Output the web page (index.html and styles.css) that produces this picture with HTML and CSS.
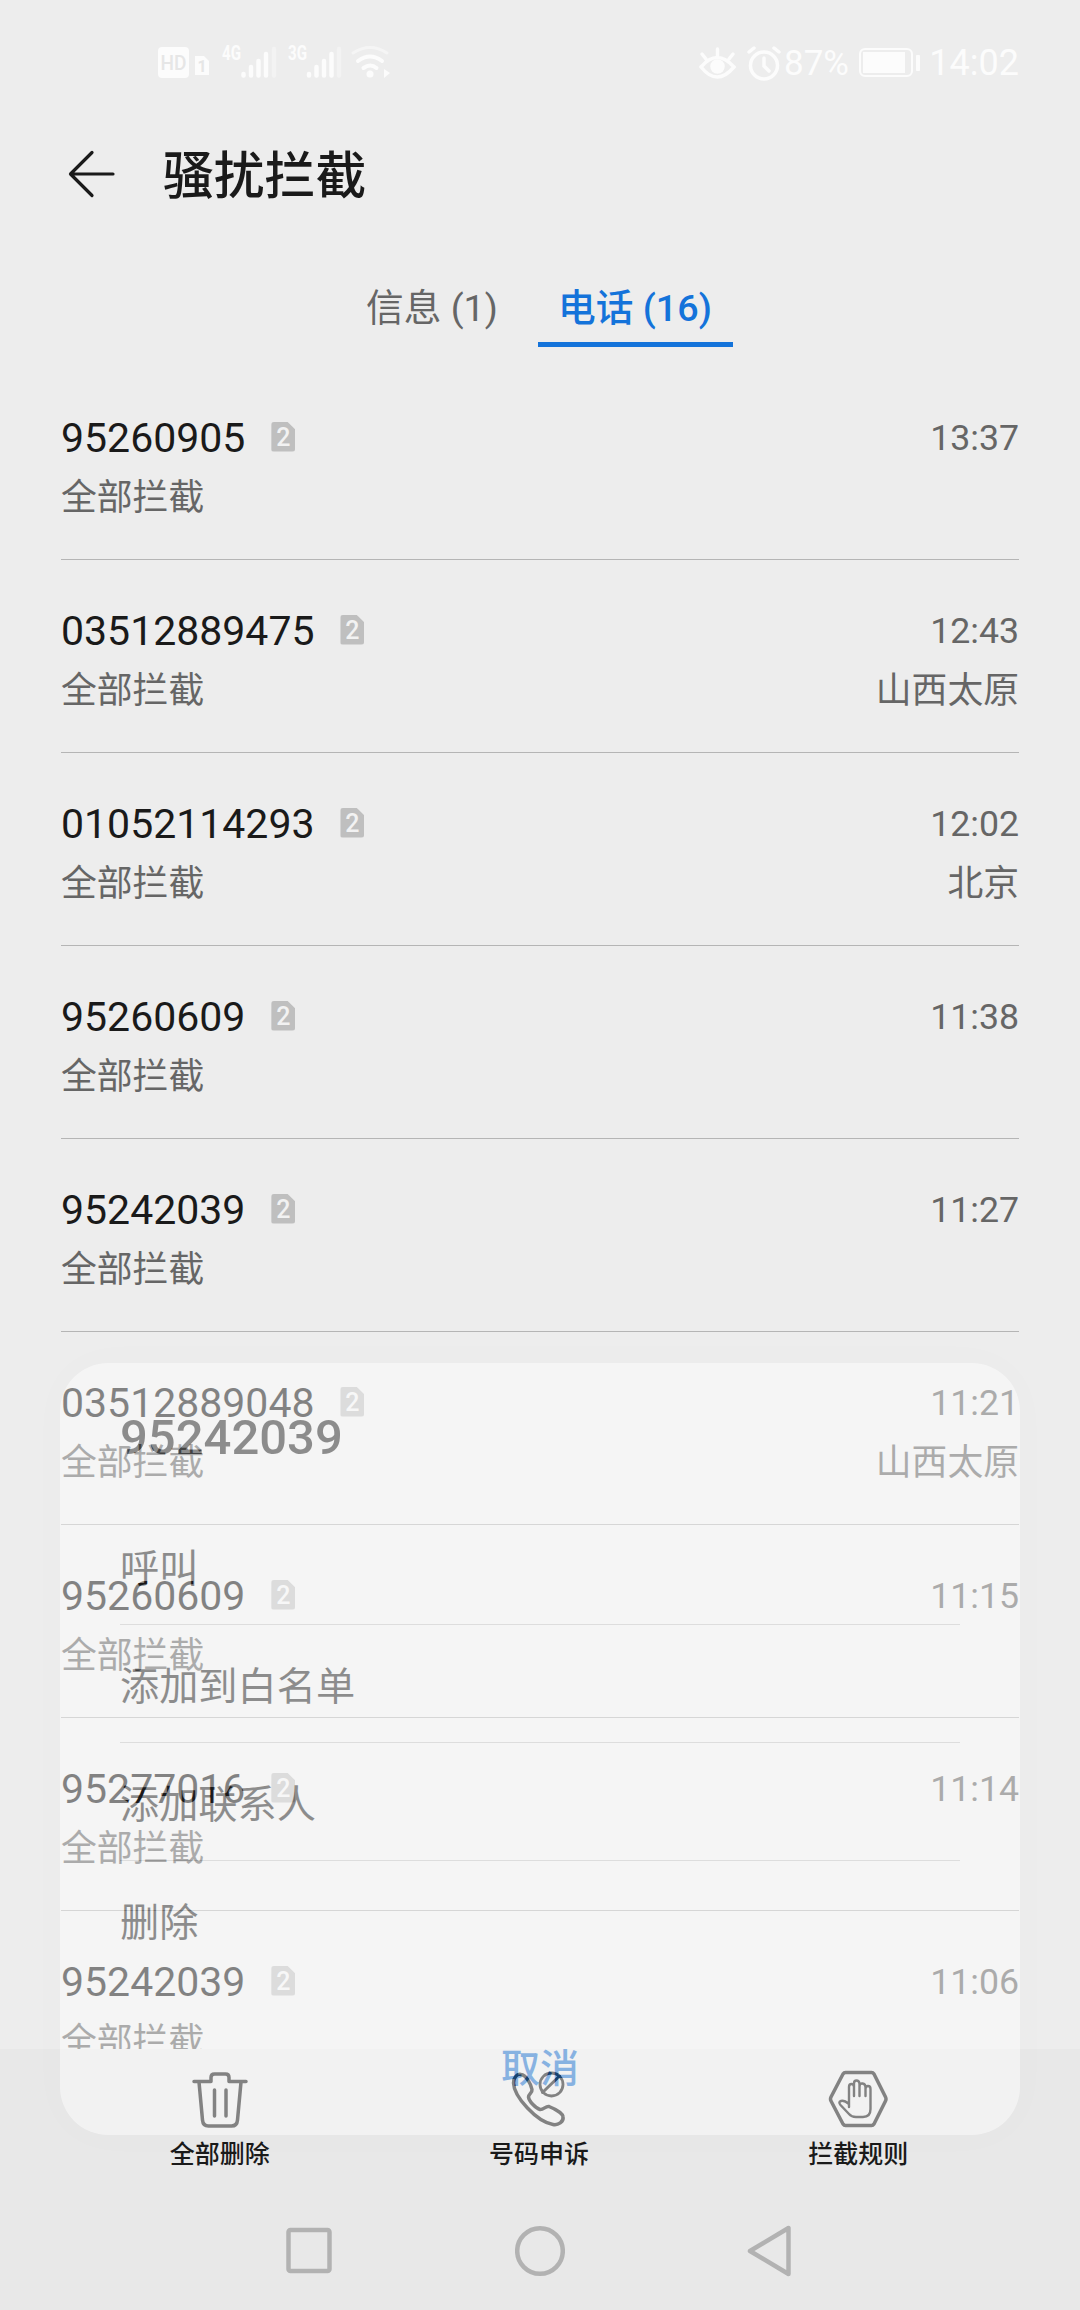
FILE: index.html
```html
<!DOCTYPE html>
<html lang="zh-CN">
<head>
    <meta charset="UTF-8">
    <meta name="viewport" content="width=device-width, initial-scale=1.0">
    <title>骚扰拦截</title>
    <link rel="stylesheet" href="styles.css">
</head>
<body>
    <div class="screen">
        <div class="status-bar">
            <svg class="status-left" width="280" height="60" viewBox="0 0 280 60">
                <rect x="18" y="17" width="31" height="31" rx="4" fill="#fcfcfc"/>
                <text x="20.5" y="40" class="hd-text" textLength="26" lengthAdjust="spacingAndGlyphs">HD</text>
                <path d="M55 26h9l5 5v14h-14v-19z" fill="#fcfcfc"/>
                <text x="57.5" y="42" class="sim-text">1</text>
                <text x="82" y="30" class="net-text" textLength="19" lengthAdjust="spacingAndGlyphs">4G</text>
                <g stroke="#fcfcfc" stroke-width="4.5" stroke-linecap="round">
                    <path d="M103.500 44v1.500M111 37v8.500M118.500 31v14.500M126 24v21.500"/>
                    <path d="M169 44v1.500M176.500 37v8.500M184 31v14.500M191.500 24v21.500"/>
                    <path d="M134 19v26.500M199 19v26.500" stroke="#f3f3f3"/>
                </g>
                <text x="148" y="30" class="net-text" textLength="19" lengthAdjust="spacingAndGlyphs">3G</text>
                <g fill="none" stroke="#fcfcfc" stroke-width="4" stroke-linecap="round">
                    <path d="M213 23q17-11 34 0" stroke="#f5f5f5" stroke-width="3"/>
                    <path d="M218 31q12-9 24 0M223.500 38q7-5 13 0"/>
                </g>
                <circle cx="230" cy="44" r="3.500" fill="#fcfcfc"/>
                <path d="M244 39l6 4-6 5z" fill="#fcfcfc"/>
            </svg>
            <div class="status-right">
                <svg width="86" height="40" viewBox="0 0 86 40" fill="none" stroke="#fcfcfc" stroke-width="3.500" stroke-linecap="round">
                    <path d="M3 24q16-19 33 0q-17 20-33 0zM19.500 6v7M4 11l4 5M35 11l-4 5"/>
                    <circle cx="19.500" cy="23.500" r="5.500" fill="#fcfcfc"/>
                    <circle cx="66" cy="22.500" r="13.500"/>
                    <path d="M66 15v8l5 5M51 9l5-4M81 9l-5-4"/>
                </svg>
                <span class="percent">87%</span>
                <svg class="battery" width="62" height="32" viewBox="0 0 62 32">
                    <rect x="1" y="2" width="52" height="27" rx="5" fill="none" stroke="#fcfcfc" stroke-width="2"/>
                    <rect x="4" y="5" width="42" height="21" fill="#fcfcfc"/>
                    <rect x="57" y="8" width="4" height="16" rx="1" fill="#fcfcfc"/>
                </svg>
                <span class="clock">14:02</span>
            </div>
        </div>

        <div class="header">
            <svg width="48" height="48" viewBox="0 0 48 48" fill="none" stroke="#1a1a1a" stroke-width="3.200" stroke-linecap="round" stroke-linejoin="round">
                <path d="M45 24H3M24 2.500L2.500 24L24 45.500"/>
            </svg>
            <h1>骚扰拦截</h1>
        </div>

        <div class="tabs">
            <div class="tab">信息 (1)</div>
            <div class="tab active">电话 (16)</div>
        </div>

        <div class="call-list">
            <div class="call">
                <div class="line"><span class="number">95260905</span><span class="sim">2</span><span class="time">13:37</span></div>
                <div class="line sub"><span>全部拦截</span></div>
            </div>
            <div class="call">
                <div class="line"><span class="number">03512889475</span><span class="sim">2</span><span class="time">12:43</span></div>
                <div class="line sub"><span>全部拦截</span><span>山西太原</span></div>
            </div>
            <div class="call">
                <div class="line"><span class="number">01052114293</span><span class="sim">2</span><span class="time">12:02</span></div>
                <div class="line sub"><span>全部拦截</span><span>北京</span></div>
            </div>
            <div class="call">
                <div class="line"><span class="number">95260609</span><span class="sim">2</span><span class="time">11:38</span></div>
                <div class="line sub"><span>全部拦截</span></div>
            </div>
            <div class="call">
                <div class="line"><span class="number">95242039</span><span class="sim">2</span><span class="time">11:27</span></div>
                <div class="line sub"><span>全部拦截</span></div>
            </div>
            <div class="call">
                <div class="line"><span class="number">03512889048</span><span class="sim">2</span><span class="time">11:21</span></div>
                <div class="line sub"><span>全部拦截</span><span>山西太原</span></div>
            </div>
            <div class="call">
                <div class="line"><span class="number">95260609</span><span class="sim">2</span><span class="time">11:15</span></div>
                <div class="line sub"><span>全部拦截</span></div>
            </div>
            <div class="call">
                <div class="line"><span class="number">95277016</span><span class="sim">2</span><span class="time">11:14</span></div>
                <div class="line sub"><span>全部拦截</span></div>
            </div>
            <div class="call">
                <div class="line"><span class="number">95242039</span><span class="sim">2</span><span class="time">11:06</span></div>
                <div class="line sub"><span>全部拦截</span></div>
            </div>
        </div>

        <div class="toolbar">
            <div class="tool">
                <svg width="60" height="60" viewBox="0 0 60 60" fill="none" stroke="#1a1a1a" stroke-width="3.500" stroke-linecap="round" stroke-linejoin="round">
                    <path d="M4 11.500h17v-4q0-3.500 3.500-3.500h11q3.500 0 3.500 3.500v4h17"/>
                    <path d="M9 12l3.500 38q.5 6 6 6h23q5.500 0 6-6l3.500-38M24.500 20v26M36 20v26"/>
                </svg>
                <span>全部删除</span>
            </div>
            <div class="tool">
                <svg width="60" height="60" viewBox="0 0 60 60" fill="none" stroke="#1a1a1a" stroke-width="3.500" stroke-linecap="round" stroke-linejoin="round">
                    <path d="M12 4.500C8 3.500 4.500 7.500 4.500 13C5 27 28 52 44 54.500C49 55.500 55 52 54 46.500C53.500 43 45 38.500 40 36.500C37 35.500 34.500 40 31 39.500C27 38.500 20 31.500 19.500 27C19.500 24 23.500 23 23 19.500C22 14 17 5 12 4.500z"/>
                    <path d="M33.500 22.500L50.500 6" stroke-width="3"/>
                    <circle cx="42.500" cy="14.500" r="11.500" stroke-width="2.800"/>
                </svg>
                <span>号码申诉</span>
            </div>
            <div class="tool">
                <svg width="60" height="60" viewBox="0 0 60 60" fill="none" stroke="#1a1a1a" stroke-width="3.500" stroke-linecap="round" stroke-linejoin="round">
                    <path d="M17.500 2.500h26q1.500 0 2.500 1.500l11.500 23q1 2 0 4l-11.500 23q-1 1.500-2.500 1.500h-26q-1.500 0-2.500-1.500l-12-23q-1-2 0-4l12-23q1-1.500 2.500-1.500z"/>
                    <path d="M21 37V17q0-3 2.500-3t2.500 3v-3.500q0-3 2.500-3t3 3v3.500q0-4 3-3.500t3 3.500v2q0-3 2.500-3t2.500 3v20q0 8-7.500 8h-7q-4.500 0-7-3l-8.500-9q-2.500-3 .5-4t8 3M26 15v11M31.500 15v11M37.500 16v10" stroke-width="2.400"/>
                </svg>
                <span>拦截规则</span>
            </div>
        </div>

        <div class="nav-bar">
            <svg width="50" height="56" viewBox="0 0 50 56"><rect x="4.500" y="7" width="41" height="41" rx="2"/></svg>
            <svg width="50" height="56" viewBox="0 0 50 56"><circle cx="25" cy="28" r="22.800"/></svg>
            <svg width="50" height="56" viewBox="0 0 50 56"><path d="M42.500 5v46L4 28z"/></svg>
        </div>

        <!-- action sheet, half way through its fade -->
        <div class="sheet">
            <div class="sheet-title">95242039</div>
            <div class="sheet-item">呼叫</div>
            <div class="sheet-item">添加到白名单</div>
            <div class="sheet-item">添加联系人</div>
            <div class="sheet-item">删除</div>
            <div class="sheet-cancel">取消</div>
        </div>
    </div>
</body>
</html>
```
FILE: styles.css
```css
* {
    box-sizing: border-box;
}
body {
    margin: 0;
    background-color: #ededed;
    color: #1a1a1a;
    font-family: Roboto, "Noto Sans CJK SC", sans-serif;
}
.screen {
    position: relative;
    display: flex;
    flex-direction: column;
    width: 1080px;
    height: 2310px;
    overflow: hidden;
}
svg {
    flex: none;
    display: block;
}

/* status bar */
.status-bar {
    display: flex;
    justify-content: space-between;
    height: 120px;
    padding: 30px 61px 0 140px;
    color: #fcfcfc;
}
.status-right {
    display: flex;
    align-items: center;
    height: 66px;
    font-size: 36px;
}
.percent {
    width: 75px;
    font-size: 35px;
}
.battery {
    margin-right: 8px;
}
.clock {
    width: 90px;
    text-align: right;
}
.hd-text {
    font-size: 21px;
    font-weight: 500;
    fill: #e6e6e6;
}
.sim-text {
    font-size: 16px;
    font-weight: 700;
    fill: #e6e6e6;
}
.net-text {
    font-size: 20px;
    font-weight: 700;
    fill: #fcfcfc;
}

/* title */
.header {
    display: flex;
    align-items: center;
    gap: 47px;
    height: 107px;
    padding-left: 68px;
}
.header h1 {
    margin: 7px 0 0;
    font-size: 50.800px;
    font-weight: 500;
    line-height: 72px;
}

/* tabs */
.tabs {
    display: flex;
    height: 140px;
    padding: 36px 0 0 346px;
    font-size: 37.700px;
    line-height: 90px;
    color: #666;
}
.tab {
    width: 192px;
    height: 84px;
    padding-left: 20px;
}
.tab.active {
    width: 195px;
    border-bottom: 5px solid #1473da;
    color: #1473da;
    font-weight: 500;
}

/* blocked calls */
.call-list {
    height: 1682px;
    padding: 0 61px;
    overflow: hidden;
}
.call {
    height: 193px;
    padding-top: 43px;
    border-bottom: 1px solid #b5b5b5;
}
.line {
    display: flex;
    align-items: center;
    height: 56px;
}
.number {
    font-size: 41px;
}
.sim {
    width: 24px;
    height: 30px;
    margin: -3px 0 0 26px;
    border-radius: 3px;
    background-color: #bfbfbf;
    clip-path: polygon(0 0, 66% 0, 100% 27%, 100% 100%, 0 100%);
    color: #f2f2f2;
    font-size: 25px;
    font-weight: 500;
    line-height: 32px;
    text-align: center;
}
.time {
    margin-left: auto;
    color: #666;
    font-size: 35.700px;
}
.line.sub {
    justify-content: space-between;
    height: 55px;
    color: #666;
    font-size: 35.800px;
}

/* bottom bars */
.toolbar {
    display: flex;
    height: 137px;
    padding: 21px 62px 0 60px;
    background-color: #e8e8e8;
}
.tool {
    flex: 1;
    display: flex;
    flex-direction: column;
    align-items: center;
    font-size: 25px;
    font-weight: 500;
    line-height: 49px;
}
.nav-bar {
    display: flex;
    justify-content: center;
    align-items: center;
    gap: 181px;
    height: 124px;
    padding-top: 6px;
    background-color: #e8e8e8;
    fill: none;
    stroke: #b2b2b2;
    stroke-width: 4.500;
    stroke-linejoin: round;
}

/* action sheet */
.sheet {
    position: absolute;
    left: 60px;
    top: 1363px;
    width: 960px;
    height: 772px;
    padding: 32px 60px 0;
    border-radius: 48px;
    background-color: #fff;
    box-shadow: 0 0 40px rgba(0, 0, 0, 0.02);
    opacity: 0.455;
}
.sheet-title {
    height: 112px;
    font-size: 49px;
    font-weight: 500;
    line-height: 85px;
}
.sheet-item {
    height: 118px;
    border-bottom: 1px solid #ccc;
    font-size: 39.200px;
    line-height: 124px;
}
.sheet-item:nth-child(5) {
    border-bottom: none;
}
.sheet-cancel {
    color: #1473da;
    font-size: 39px;
    font-weight: 500;
    line-height: 181px;
    text-align: center;
}
```
